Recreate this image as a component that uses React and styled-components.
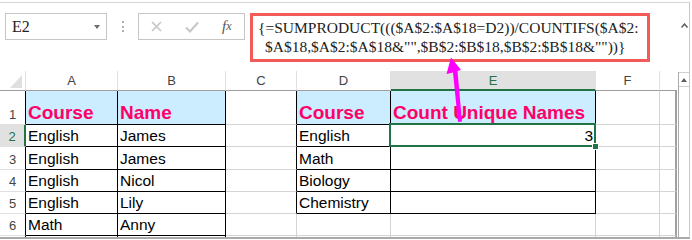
import React from 'react'
import styled, { createGlobalStyle, css } from 'styled-components'

const GlobalStyle = createGlobalStyle`
  html, body {
    margin: 0;
    padding: 0;
    background: #fff;
    overflow: hidden;
  }
  body {
    padding-top: 2px;
  }
`

const GREEN = '#217346'
const GRID = '#d4d4d4'
const BLUE = '#ccecff'

const Window = styled.div`
  position: relative;
  width: 690px;
  height: 237px;
  box-sizing: border-box;
  border-top: 1px solid #d5d5d5;
  border-right: 1px solid #c8c8c8;
  border-bottom: 2px solid #a9a9a9;
  display: flex;
  flex-direction: column;
  overflow: hidden;
  background: #fff;
`

const FormulaBar = styled.div`
  height: 68px;
  box-sizing: border-box;
  padding-top: 10px;
  display: flex;
  align-items: flex-start;
`

const NameBox = styled.div`
  margin-left: 5px;
  width: 102px;
  height: 27px;
  box-sizing: border-box;
  border: 1px solid #c6c6c6;
  padding: 0 6px;
  display: flex;
  align-items: center;
  justify-content: space-between;
  font-family: "Liberation Serif", "Times New Roman", serif;
  font-size: 16px;
  color: #222;
`

const DropArrow = styled.span`
  width: 0;
  height: 0;
  border-left: 3.5px solid transparent;
  border-right: 3.5px solid transparent;
  border-top: 4px solid #6d6d6d;
`

const Grip = styled.div`
  width: 31px;
  height: 27px;
  display: flex;
  flex-direction: column;
  align-items: center;
  justify-content: center;
  gap: 2.5px;
  span {
    width: 2px;
    height: 2px;
    background: #b0b0b0;
  }
`

const FxBox = styled.div`
  width: 107px;
  height: 27px;
  box-sizing: border-box;
  border: 1px solid #c6c6c6;
  display: flex;
  align-items: center;
  padding-left: 12px;
`

const FxIcon = styled.span`
  margin-left: ${({ $gap }) => $gap || 0}px;
  display: flex;
  align-items: center;
  font-family: "Liberation Serif", "Times New Roman", serif;
  font-style: italic;
  font-size: 15px;
  color: #555;
  small {
    font-size: 12px;
  }
`

const FormulaWrap = styled.div`
  flex: 1;
  margin-left: 5px;
  display: flex;
  align-items: flex-start;
`

const RedBox = styled.div`
  width: 400px;
  height: 49px;
  box-sizing: border-box;
  border: 3px solid #f35b5b;
  padding: 2px 0 0 5px;
  font-family: "Liberation Serif", "Times New Roman", serif;
  font-size: 15.5px;
  line-height: 19px;
  color: #222;
  white-space: nowrap;
`

const FormulaLine = styled.div`
  padding-left: ${({ $indent }) => $indent || 0}px;
`

const Collapse = styled.svg`
  margin-left: auto;
  margin-right: 1px;
  margin-top: 10px;
`

const SheetArea = styled.div`
  height: 166px;
  display: flex;
`

const Sheet = styled.div`
  width: 677px;
  height: 166px;
  overflow: hidden;
  display: grid;
  grid-template-columns: 26px 92px 108px 71px 94px 205px 64px 17px;
  grid-template-rows: 20px 34px 22px 23px 22px 22px 22px 22px;
`

const Corner = styled.div`
  box-sizing: border-box;
  border-right: 1px solid #e0e0e0;
  border-bottom: 1px solid #9e9e9e;
  display: flex;
  align-items: flex-end;
  justify-content: flex-end;
  padding: 0 3px 2px 0;
  span {
    width: 0;
    height: 0;
    border-left: 12px solid transparent;
    border-bottom: 13px solid #dfdfdf;
  }
`

const ColHead = styled.div`
  box-sizing: border-box;
  display: flex;
  align-items: center;
  justify-content: center;
  font-family: "Liberation Sans", Arial, sans-serif;
  font-size: 13px;
  color: ${({ $active }) => ($active ? GREEN : '#444')};
  background: ${({ $active }) => ($active ? '#e1e1e1' : '#fff')};
  border-right: ${({ $last }) => ($last ? 'none' : '1px solid #e0e0e0')};
  border-bottom: ${({ $active }) => ($active ? `2px solid ${GREEN}` : '1px solid #9e9e9e')};
`

const RowHead = styled.div`
  box-sizing: border-box;
  display: flex;
  align-items: flex-end;
  justify-content: center;
  padding-bottom: 2px;
  font-family: "Liberation Sans", Arial, sans-serif;
  font-size: 13px;
  line-height: 15px;
  color: ${({ $active }) => ($active ? GREEN : '#444')};
  background: ${({ $active }) => ($active ? '#e1e1e1' : '#fff')};
  border-right: ${({ $active, $edge }) => ($active ? `2px solid ${GREEN}` : `1px solid ${$edge}`)};
  border-bottom: 1px solid #e0e0e0;
`

const Cell = styled.div`
  position: relative;
  box-sizing: border-box;
  display: flex;
  align-items: flex-end;
  justify-content: ${({ $align }) => ($align === 'right' ? 'flex-end' : 'flex-start')};
  padding: 0 2px ${({ $head }) => ($head ? 0 : 1)}px 2px;
  background: ${({ $bg }) => $bg || '#fff'};
  border-right: ${({ $rw }) => $rw}px solid ${({ $rc }) => $rc};
  border-bottom: 1px solid ${({ $bc }) => $bc};
  font-family: "Liberation Sans", Arial, sans-serif;
  font-size: ${({ $head }) => ($head ? '19px' : '15.5px')};
  font-weight: ${({ $head }) => ($head ? 700 : 400)};
  color: ${({ $head }) => ($head ? '#ff0066' : '#000')};
  line-height: 1.15;
  white-space: nowrap;
  ${({ $selected }) =>
    $selected &&
    css`
      &::after {
        content: '';
        position: absolute;
        left: -2px;
        top: -2px;
        right: -1px;
        bottom: -1px;
        border: 2px solid ${GREEN};
        z-index: 2;
      }
      &::before {
        content: '';
        position: absolute;
        right: -4px;
        bottom: -4px;
        width: 5px;
        height: 5px;
        background: ${GREEN};
        border: 1px solid #fff;
        z-index: 3;
      }
    `}
`

const ScrollBar = styled.div`
  margin-left: 1px;
  margin-top: 1px;
  width: 11px;
  box-sizing: border-box;
  border-left: 1px solid #ababab;
  display: flex;
  flex-direction: column;
`

const ScrollUp = styled.div`
  height: 15px;
  box-sizing: border-box;
  border-top: 1px solid #d0d0d0;
  border-bottom: 1px solid #d0d0d0;
  display: flex;
  align-items: center;
  justify-content: center;
  span {
    width: 0;
    height: 0;
    border-left: 3.5px solid transparent;
    border-right: 3.5px solid transparent;
    border-bottom: 4px solid #606060;
  }
`

const Arrow = styled.svg`
  position: absolute;
  left: 440px;
  top: 52px;
  z-index: 5;
`

const COLS = ['A', 'B', 'C', 'D', 'E', 'F', 'G']

// row 7 is only a sliver at the bottom edge, so its number is left out
const DATA = [
  ['Course', 'Name', '', 'Course', 'Count Unique Names'],
  ['English', 'James', '', 'English', '3'],
  ['English', 'James', '', 'Math', ''],
  ['English', 'Nicol', '', 'Biology', ''],
  ['English', 'Lily', '', 'Chemistry', ''],
  ['Math', 'Anny'],
  [],
]

const inTable = (r, c) =>
  ((c === 1 || c === 2) && r >= 1) || ((c === 4 || c === 5) && r >= 1 && r <= 5)

const App = () => {
  return (
    <>
      <GlobalStyle />
      <Window>
        <FormulaBar>
          <NameBox>
            <span>E2</span>
            <DropArrow />
          </NameBox>
          <Grip>
            <span />
            <span />
            <span />
          </Grip>
          <FxBox>
            <FxIcon>
              <svg width="11" height="11" viewBox="0 0 11 11">
                <path d="M1 1 L10 10 M10 1 L1 10" stroke="#c6c6c6" strokeWidth="1.6" fill="none" />
              </svg>
            </FxIcon>
            <FxIcon $gap={23}>
              <svg width="14" height="12" viewBox="0 0 14 12">
                <path d="M1 6.5 L5 10.5 L13 1.5" stroke="#c6c6c6" strokeWidth="2" fill="none" />
              </svg>
            </FxIcon>
            <FxIcon $gap={23}>
              f<small>x</small>
            </FxIcon>
          </FxBox>
          <FormulaWrap>
            <RedBox>
              <FormulaLine>{'{=SUMPRODUCT((($A$2:$A$18=D2))/COUNTIFS($A$2:'}</FormulaLine>
              <FormulaLine $indent={7}>{'$A$18,$A$2:$A$18&"",$B$2:$B$18,$B$2:$B$18&""))}'}</FormulaLine>
            </RedBox>
            <Collapse width="7" height="5" viewBox="0 0 7 5">
              <path d="M0.5 4.5 L3.5 1 L6.5 4.5" stroke="#555" strokeWidth="1.4" fill="none" />
            </Collapse>
          </FormulaWrap>
        </FormulaBar>

        <SheetArea>
          <Sheet>
            <Corner>
              <span />
            </Corner>
            {COLS.map((col) => (
              <ColHead key={col} $active={col === 'E'} $last={col === 'G'}>
                {col === 'G' ? '' : col}
              </ColHead>
            ))}
            {DATA.map((row, ri) => {
              const r = ri + 1
              return (
                <React.Fragment key={r}>
                  <RowHead $active={r === 2} $edge={inTable(r, 1) ? '#000' : '#9e9e9e'}>
                    {r < 7 ? r : ''}
                  </RowHead>
                  {COLS.map((col, ci) => {
                    const c = ci + 1
                    const last = col === 'G'
                    const rc = last ? '#a0a0a0' : inTable(r, c) || inTable(r, c + 1) ? '#000' : GRID
                    const bc = inTable(r, c) || inTable(r + 1, c) ? '#000' : GRID
                    return (
                      <Cell
                        key={col}
                        $rc={rc}
                        $rw={last ? 2 : 1}
                        $bc={bc}
                        $bg={r === 1 && inTable(r, c) ? BLUE : undefined}
                        $head={r === 1}
                        $align={r === 2 && col === 'E' ? 'right' : 'left'}
                        $selected={r === 2 && col === 'E'}
                      >
                        {row[ci] || ''}
                      </Cell>
                    )
                  })}
                </React.Fragment>
              )
            })}
          </Sheet>
          <ScrollBar>
            <ScrollUp>
              <span />
            </ScrollUp>
          </ScrollBar>
        </SheetArea>

        <Arrow width="30" height="72" viewBox="440 55 30 72">
          <polygon
            points="451,57.5 461,70 457.5,71 462,121.5 458,122 453,72.5 446.5,74"
            fill="#ff00ff"
          />
        </Arrow>
      </Window>
    </>
  )
}

export default App
